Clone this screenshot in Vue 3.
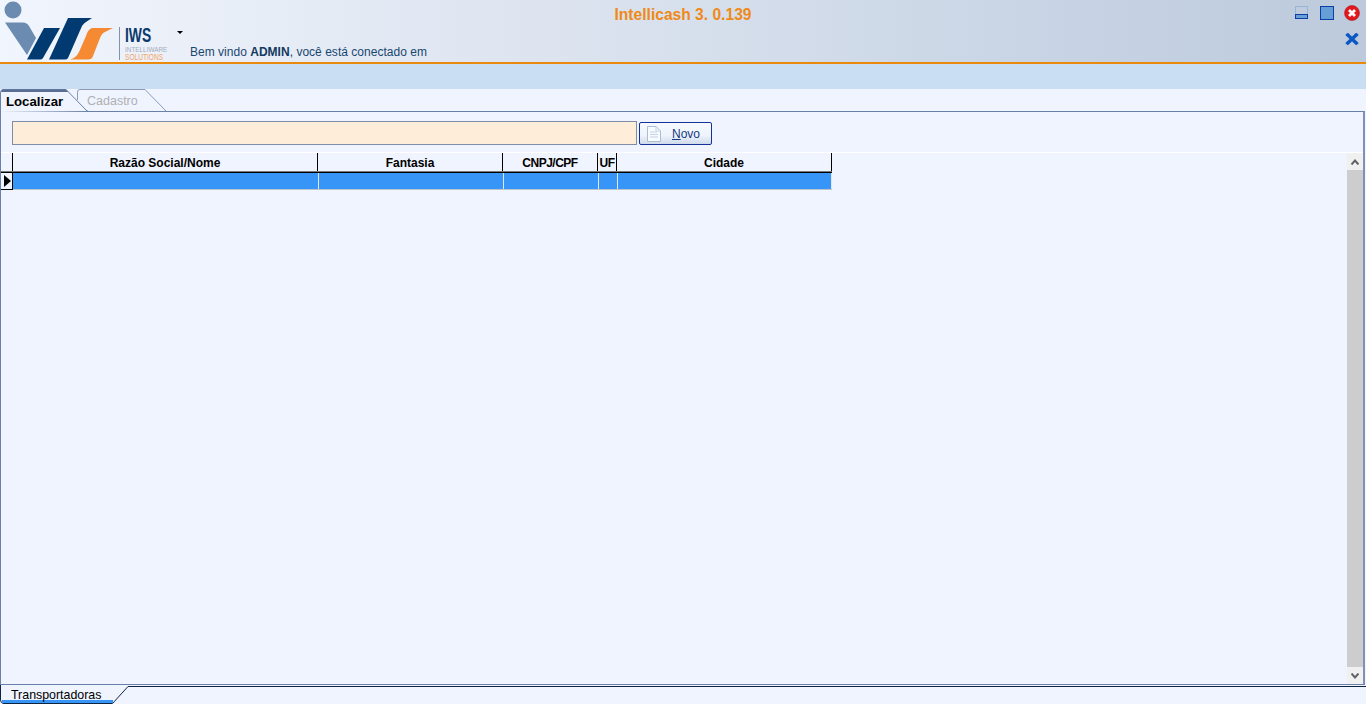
<script setup>
const columns = [
  { title: 'Razão Social/Nome', width: 305, cell: 306, spacing: 0 },
  { title: 'Fantasia', width: 185, cell: 185, spacing: 0 },
  { title: 'CNPJ/CPF', width: 95, cell: 95, spacing: -0.5 },
  { title: 'UF', width: 19, cell: 19, spacing: -0.5 },
  { title: 'Cidade', width: 215, cell: 214, spacing: 0 }
]
</script>

<template>
  <div class="app">
    <header class="top">
      <div class="brand">
        <svg class="logo" width="168" height="62" viewBox="0 0 168 62">
          <circle cx="13" cy="10" r="8.500" fill="#6b8bb0" />
          <path d="M5 22.500 H23 Q27 22.500 29 26 L36 38 L27 55 Z" fill="#6b8bb0" />
          <path d="M44 28 H60 L43 58 Q42 59.500 40 59.500 H27 Z" fill="#003a70" />
          <path d="M68 18 H92 L86 22 Q84 23 82 26 L68 58 Q67 59.500 65 59.500 H49 Z" fill="#003a70" />
          <path d="M92 28 H113 L105 32 Q102 33 100 38 L93 56 Q92 59.500 88 59.500 H70 Q76 58 79 52 L86 36 Q88 29 92 28 Z" fill="#f68a33" />
          <rect x="119" y="27" width="1" height="33" fill="#7f93ab" />
          <text transform="translate(125 42) scale(0.84 1.2)" class="iws">IWS</text>
          <text transform="translate(125 52) scale(1 1.25)" class="intelli">INTELLIWARE</text>
          <text transform="translate(125 60) scale(1 1.25)" class="sol">SOLUTIONS</text>
        </svg>
        <div class="welcome-col">
          <svg class="caret" width="6" height="3" viewBox="0 0 6 3"><path d="M0 0 H6 L3 3 Z" fill="#000" /></svg>
          <div class="welcome">Bem vindo <b>ADMIN</b>, você está conectado em</div>
        </div>
      </div>
      <h1 class="title">Intellicash 3. 0.139</h1>
      <div class="win">
        <div class="win-row">
          <svg class="w-min" width="14" height="14" viewBox="0 0 14 14">
            <rect x="0.500" y="0.500" width="12" height="8" fill="none" stroke="#6e9fd0" stroke-dasharray="1 1" />
            <rect x="0.500" y="8.500" width="12" height="4" fill="#6a9fd6" stroke="#0b3fa6" />
          </svg>
          <svg class="w-max" width="14" height="14" viewBox="0 0 14 14">
            <rect x="0.500" y="0.500" width="13" height="13" fill="#659fd6" stroke="#0b3fa6" />
          </svg>
          <svg width="16" height="16" viewBox="0 0 16 16">
            <circle cx="8" cy="8" r="7.500" fill="#e5171d" stroke="#a01015" stroke-width="0.500" />
            <path d="M5 5 L11 11 M11 5 L5 11" stroke="#fff" stroke-width="2.800" />
          </svg>
        </div>
        <svg class="x2" width="14" height="12" viewBox="0 0 14 12">
          <path d="M1.500 0.800 L12.500 11.200 M12.500 0.800 L1.500 11.200" stroke="#0a58c4" stroke-width="3.500" />
        </svg>
      </div>
    </header>

    <div class="band"></div>

    <nav class="tabs">
      <div class="tab tab-active">
        <svg class="tab-shape" width="88" height="23" viewBox="0 0 88 23">
          <path d="M0.500 23 V4 Q0.500 0.500 3 0.500 H66 L87 22 H88" fill="#eff4fe" stroke="#6b80a8" />
          <path d="M1 3 Q1 0.500 3 0.500 H66 L68.500 3 Z" fill="#5a6f94" />
        </svg>
        <span>Localizar</span>
      </div>
      <div class="tab tab-off">
        <svg class="tab-shape" width="90" height="23" viewBox="0 0 90 23">
          <path d="M0.500 11 V3 Q0.500 0.500 3 0.500 H68 L89 22" fill="none" stroke="#8b9bb8" />
        </svg>
        <span>Cadastro</span>
      </div>
    </nav>

    <main class="panel">
      <div class="tools">
        <input class="search" type="text" />
        <button class="new" type="button">
          <svg width="14" height="16" viewBox="0 0 14 16">
            <path d="M0.500 0.500 H9 L13.500 5 V15.500 H0.500 Z" fill="#f8fbff" stroke="#a9bdd4" />
            <path d="M9 0.500 V5 H13.500 M3 6 H10 M3 8.500 H11 M3 11 H11" fill="none" stroke="#c4d3e3" />
          </svg>
          <span><u>N</u>ovo</span>
        </button>
      </div>

      <div class="table-wrap">
        <div class="table">
          <div class="row head">
            <div class="ind"></div>
            <div
              v-for="c in columns"
              :key="c.title"
              class="th"
              :style="{ width: c.width + 'px', letterSpacing: c.spacing + 'px' }"
            >{{ c.title }}</div>
          </div>
          <div class="row body">
            <div class="ind">
              <svg width="7" height="12" viewBox="0 0 7 12"><path d="M0 0 L7 6 L0 12 Z" fill="#000" /></svg>
            </div>
            <div v-for="c in columns" :key="c.title" class="td" :style="{ width: c.cell + 'px' }"></div>
          </div>
        </div>
        <div class="scroll">
          <div class="arrow">
            <svg width="8" height="6" viewBox="0 0 8 6"><path d="M0.500 5.500 L4 1.500 L7.500 5.500" fill="none" stroke="#5f6368" stroke-width="2" /></svg>
          </div>
          <div class="thumb"></div>
          <div class="arrow">
            <svg width="8" height="6" viewBox="0 0 8 6"><path d="M0.500 0.500 L4 4.500 L7.500 0.500" fill="none" stroke="#5f6368" stroke-width="2" /></svg>
          </div>
        </div>
      </div>
    </main>

    <footer class="foot">
      <div class="foot-tab">
        <svg class="foot-shape" width="129" height="19" viewBox="0 0 129 19">
          <path d="M0.500 0 V14 Q0.500 18.500 4 18.500 H112.500 L128 1.500 H129" fill="none" stroke="#10233f" />
          <rect x="2" y="15" width="111" height="3" fill="#3895f8" />
        </svg>
        <span>Transportadoras</span>
      </div>
      <div class="foot-line"></div>
    </footer>
  </div>
</template>

<style>
html, body { margin: 0; background: #eff4fe; }
</style>

<style scoped>
.app {
  height: 704px;
  display: flex;
  flex-direction: column;
  overflow: hidden;
  background: #eff4fe;
  font-family: "Liberation Sans", Arial, sans-serif;
  font-size: 12px;
  color: #000;
}
.top {
  height: 62px;
  flex: none;
  display: grid;
  grid-template-columns: 1fr auto 1fr;
  background: linear-gradient(90deg, #f1f5fd 0%, #dfe6f1 35%, #c9d5e5 75%, #bccadc 100%);
  border-bottom: 2px solid #e98a0f;
}
.brand { display: flex; }
.logo { flex: none; }
.iws { font: bold 16.500px "Liberation Sans", Arial, sans-serif; fill: #0c3a6c; }
.intelli { font: 6.400px "Liberation Sans", Arial, sans-serif; fill: #a3adbb; }
.sol { font: 6.600px "Liberation Sans", Arial, sans-serif; fill: #f3a468; }
.welcome-col { width: 300px; padding-top: 31px; padding-left: 9px; box-sizing: border-box; }
.caret { display: block; }
.welcome { margin: 11px 0 0 13px; color: #18476f; white-space: nowrap; line-height: 15px; letter-spacing: 0.020px; }
.welcome b { color: #123a60; }
.title {
  margin: 6px 0 0;
  font-size: 15.600px;
  line-height: 17px;
  font-weight: bold;
  color: #ef8a17;
}
.win {
  display: flex;
  flex-direction: column;
  align-items: flex-end;
  padding: 5px 6px 0 0;
}
.win-row { display: flex; align-items: center; }
.w-min { margin-right: 11px; }
.w-max { margin-right: 10px; }
.x2 { margin: 12px 1px 0 0; }
.band { height: 25px; flex: none; background: #c9ddf3; }
.tabs { height: 22px; flex: none; display: flex; background: #eff4fe; }
.tab { position: relative; height: 22px; box-sizing: border-box; }
.tab span { position: relative; display: block; line-height: 25px; }
.tab-shape { position: absolute; left: 0; top: 0; }
.tab-active { width: 77px; padding-left: 6px; color: #000; font-size: 13.200px; font-weight: bold; }
.tab-off { width: 90px; padding-left: 10px; color: #b0b0b4; font-size: 12.500px; }
.panel {
  flex: 1;
  min-height: 0;
  display: flex;
  flex-direction: column;
  margin-right: 1px;
  border: 1px solid #6b80a8;
  border-right: 2px solid #7f92b6;
}
.tools { display: flex; padding: 9px 0 0 11px; gap: 2px; height: 31px; flex: none; }
.search {
  width: 625px;
  height: 24px;
  box-sizing: border-box;
  background: #feeed9;
  border: 1px solid #7e8ea8;
  padding: 0;
  margin: 0;
}
.new {
  width: 73px;
  height: 23px;
  margin-top: 1px;
  box-sizing: border-box;
  display: flex;
  align-items: center;
  padding: 0 0 0 7px;
  gap: 11px;
  border: 1px solid #14329a;
  border-radius: 2px;
  background: linear-gradient(180deg, #f6f9ff 0%, #eef3fc 60%, #cfdaea 100%);
  font: 12px "Liberation Sans", Arial, sans-serif;
  color: #123a80;
}
.table-wrap { flex: 1; min-height: 0; display: flex; border-top: 1px solid #fff; }
.table { flex: 1; min-width: 0; }
.row { display: flex; width: fit-content; }
.ind {
  width: 8px;
  padding-left: 3px;
  flex: none;
  display: flex;
  align-items: center;
  border-right: 1px solid #000;
}
.head { height: 19px; border-bottom: 1px solid #000; box-shadow: inset 0 -1px 0 #777; }
.th {
  box-sizing: border-box;
  border-right: 1px solid #000;
  text-align: center;
  font-weight: bold;
  line-height: 21px;
  height: 18px;
  flex: none;
  white-space: nowrap;
  overflow: hidden;
}
.head .ind { height: 18px; }
.body { height: 16px; background: #3895f8; border-bottom: 1px solid #bcc4cf; }
.body .ind { background: #eff4fe; border-bottom: 1px solid #000; margin-bottom: -1px; }
.td { box-sizing: border-box; border-right: 1px solid #dfe6ee; flex: none; }
.scroll {
  width: 16px;
  flex: none;
  display: flex;
  flex-direction: column;
  background: #f0f0f0;
}
.arrow { height: 17px; flex: none; display: flex; align-items: center; justify-content: center; }
.thumb { flex: 1; background: #cdcdcd; }
.foot { height: 19px; flex: none; display: flex; background: #eff4fe; }
.foot-tab { position: relative; width: 129px; flex: none; height: 19px; padding: 1px 0 0 11px; box-sizing: border-box; line-height: 19px; font-size: 12.400px; }
.foot-tab span { position: relative; }
.foot-shape { position: absolute; left: 0; top: 0; }
.foot-line { flex: 1; height: 1px; margin-top: 1px; background: #10233f; }
</style>
